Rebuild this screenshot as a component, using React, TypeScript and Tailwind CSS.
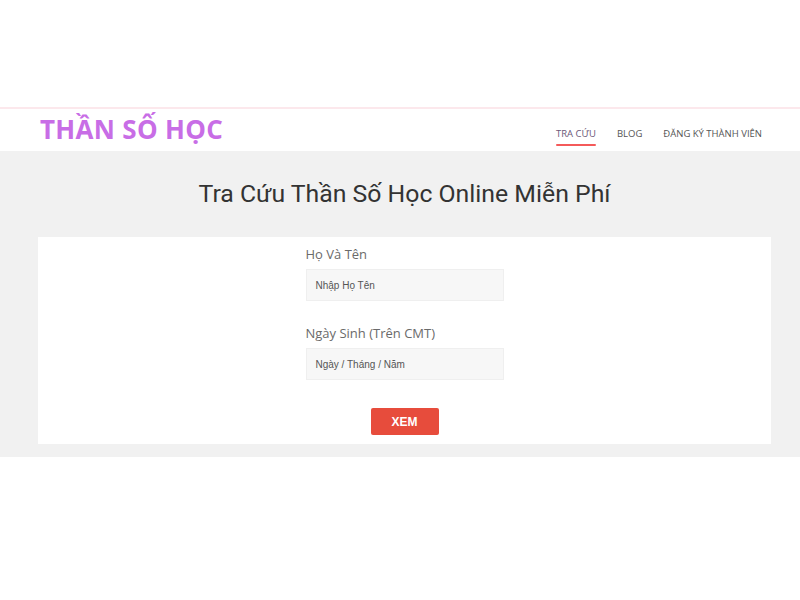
import React from "react";

export default function App() {
  return (
    <div className="w-[800px] h-[600px] bg-white overflow-hidden" style={{ fontFamily: "'Open Sans', sans-serif" }}>
      <div className="h-[107px]" />
      <div className="h-[2px] bg-[#fce8ec]" />
      <header className="h-[42px] flex items-center justify-between pl-[40px] pr-[38px]">
        <div className="text-[26px] font-bold text-[#c86de6] leading-none tracking-[0.3px] mt-[-2px]">THẦN SỐ HỌC</div>
        <nav className="flex items-start gap-[21px] text-[9.5px] text-[#555] uppercase pt-[12px]" style={{ fontFamily: "'Open Sans', sans-serif" }}>
          <div className="flex flex-col items-center">
            <span className="text-[#6b5778] leading-[14px]">Tra Cứu</span>
            <div className="mt-[3px] h-[2px] w-[40px] bg-[#f45a5a] rounded" />
          </div>
          <span className="leading-[14px]">Blog</span>
          <span className="leading-[14px]">Đăng Ký Thành Viên</span>
        </nav>
      </header>
      <section className="bg-[#f1f1f1] pt-[27px] pb-[13px]">
        <h1 className="text-center pl-[9px] text-[24.8px] leading-[32px] text-[#333]" style={{ fontFamily: "Roboto, sans-serif" }}>
          Tra Cứu Thần Số Học Online Miễn Phí
        </h1>
        <div className="ml-[38px] w-[733px] mt-[27px] bg-white pt-[9px] pb-[9px] flex justify-center">
          <div className="w-[198px] flex flex-col">
            <label className="text-[13px] leading-[16px] text-[#6a6a6a]">Họ Và Tên</label>
            <div className="mt-[7px] h-[32px] bg-[#f7f7f7] border border-[#efefef] flex items-center pl-[9px] text-[10px] text-[#555]" style={{ fontFamily: "Arial, 'Liberation Sans', sans-serif" }}>
              Nhập Họ Tên
            </div>
            <label className="mt-[24px] text-[13px] leading-[16px] text-[#6a6a6a]">Ngày Sinh (Trên CMT)</label>
            <div className="mt-[7px] h-[32px] bg-[#f7f7f7] border border-[#efefef] flex items-center pl-[9px] text-[10px] text-[#555]" style={{ fontFamily: "Arial, 'Liberation Sans', sans-serif" }}>
              Ngày / Tháng / Năm
            </div>
            <div className="mt-[28px] flex justify-center">
              <button className="w-[68px] h-[27px] bg-[#e74c3c] rounded-[2px] text-white text-[12px] font-bold" style={{ fontFamily: "Arial, 'Liberation Sans', sans-serif" }}>
                XEM
              </button>
            </div>
          </div>
        </div>
      </section>
    </div>
  );
}
